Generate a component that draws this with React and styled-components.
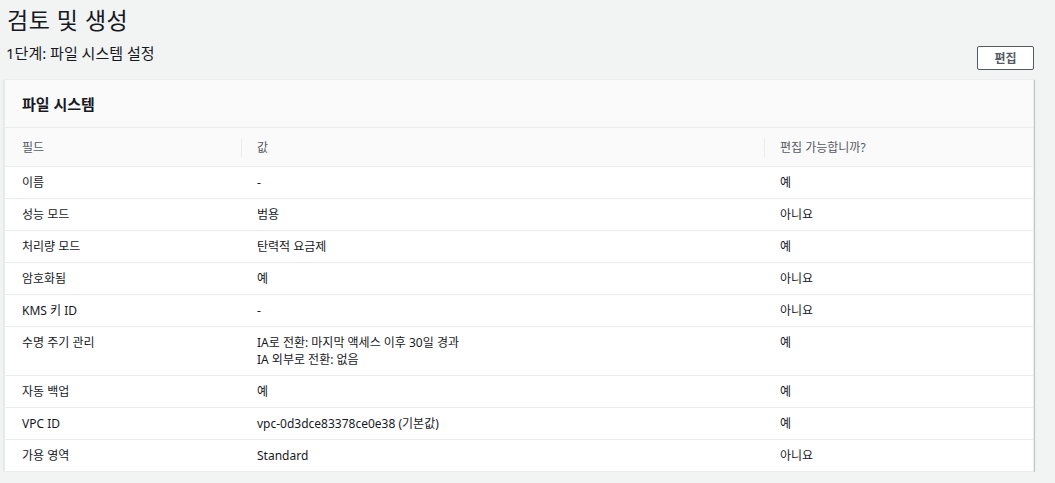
import styled, { createGlobalStyle } from "styled-components"

const GlobalStyle = createGlobalStyle`
  body {
    margin: 0;
    background: #f2f3f3;
    font-family: "Noto Sans", "Noto Sans CJK KR", sans-serif;
    color: #16191f;
  }
`

const Page = styled.div`
  padding: 0 21px 0 4px;
`

const Title = styled.h1`
  margin: 0;
  padding: 3px 0 0 3px;
  font-size: 23px;
  font-weight: 400;
  line-height: 34px;
  letter-spacing: 0.5px;
`

const StepBar = styled.div`
  display: flex;
  justify-content: space-between;
  align-items: flex-start;
  margin-top: 9px;
  margin-bottom: 9px;
`

const StepTitle = styled.h2`
  margin: -3px 0 0 2px;
  font-size: 15px;
  font-weight: 400;
  line-height: 20px;
`

const Button = styled.button`
  width: 57px;
  height: 24px;
  border: 1px solid #545b64;
  border-radius: 2px;
  background: #fff;
  color: #545b64;
  font-family: inherit;
  font-size: 12px;
  font-weight: 700;
  padding: 0;
`

const Card = styled.section`
  background: #fff;
  border: 1px solid #eaeded;
  box-shadow: 0 1px 1px 0 rgba(0, 28, 36, 0.3), 1px 1px 1px 0 rgba(0, 28, 36, 0.15);
`

const CardHeader = styled.div`
  background: #fafafa;
  border-bottom: 1px solid #eaeded;
  padding: 0 17px;
  height: 47px;
  display: flex;
  align-items: center;
  font-size: 15px;
  font-weight: 700;
`

const Table = styled.table`
  width: 100%;
  border-collapse: collapse;
  table-layout: fixed;
  font-size: 12px;
`

const HeadCell = styled.th`
  position: relative;
  background: #fafafa;
  height: 38px;
  padding: 0 17px 0 ${p => (p.$first ? 17 : 16)}px;
  text-align: left;
  font-weight: 400;
  color: #545b64;
  border-bottom: 1px solid #eaeded;

  &::before {
    content: "";
    display: ${p => (p.$first ? "none" : "block")};
    position: absolute;
    left: 0;
    top: 10px;
    bottom: 9px;
    border-left: 1px solid #eaeded;
  }
`

const Row = styled.tr`
  border-bottom: 1px solid #eaeded;
  &:last-child {
    border-bottom: none;
  }
`

const Cell = styled.td`
  height: 31px;
  padding: ${p => (p.$multi ? "7px" : "0")} 17px ${p => (p.$multi ? "7px" : "0")} ${p => (p.$first ? 17 : 16)}px;
  vertical-align: ${p => (p.$multi ? "top" : "middle")};
  line-height: 17px;
  color: #16191f;
`

const rows = [
  ["이름", ["-"], "예"],
  ["성능 모드", ["범용"], "아니요"],
  ["처리량 모드", ["탄력적 요금제"], "예"],
  ["암호화됨", ["예"], "아니요"],
  ["KMS 키 ID", ["-"], "아니요"],
  ["수명 주기 관리", ["IA로 전환: 마지막 액세스 이후 30일 경과", "IA 외부로 전환: 없음"], "예"],
  ["자동 백업", ["예"], "예"],
  ["VPC ID", ["vpc-0d3dce83378ce0e38 (기본값)"], "예"],
  ["가용 영역", ["Standard"], "아니요"],
]

const App = () => {
  return (
    <>
      <GlobalStyle />
      <Page>
        <Title>검토 및 생성</Title>
        <StepBar>
          <StepTitle>1단계: 파일 시스템 설정</StepTitle>
          <Button>편집</Button>
        </StepBar>
        <Card>
          <CardHeader>파일 시스템</CardHeader>
          <Table>
            <colgroup>
              <col style={{ width: 236 }} />
              <col style={{ width: 523 }} />
              <col />
            </colgroup>
            <thead>
              <tr>
                <HeadCell $first>필드</HeadCell>
                <HeadCell>값</HeadCell>
                <HeadCell>편집 가능합니까?</HeadCell>
              </tr>
            </thead>
            <tbody>
              {rows.map(([field, value, editable]) => {
                const multi = value.length > 1
                return (
                  <Row key={field}>
                    <Cell $first $multi={multi}>{field}</Cell>
                    <Cell $multi={multi}>
                      {value.map(v => (
                        <div key={v}>{v}</div>
                      ))}
                    </Cell>
                    <Cell $multi={multi}>{editable}</Cell>
                  </Row>
                )
              })}
            </tbody>
          </Table>
        </Card>
      </Page>
    </>
  )
}

export default App
